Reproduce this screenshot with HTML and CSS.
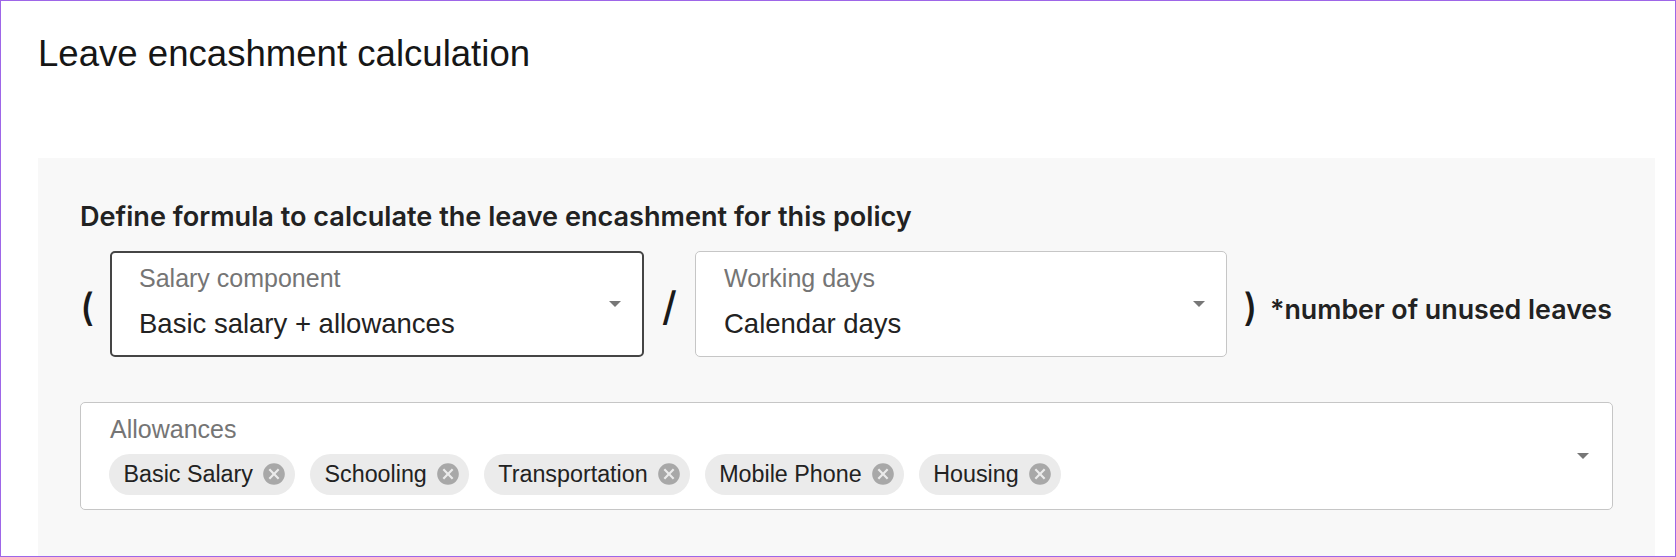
FILE: index.html
```html
<!DOCTYPE html>
<html lang="en">
<head>
<meta charset="utf-8">
<title>Leave encashment calculation</title>
<link rel="stylesheet" href="styles.css">
</head>
<body>
<div class="frame">
  <h1 class="title">Leave encashment calculation</h1>
  <section class="panel">
    <p class="intro">Define formula to calculate the leave encashment for this policy</p>
    <div class="formula">
      <span class="sym sym-open">(</span>
      <div class="select select-active">
        <div class="select-body">
          <span class="select-label">Salary component</span>
          <span class="select-value">Basic salary + allowances</span>
        </div>
        <svg class="caret" width="12" height="6" viewBox="0 0 12 6"><path d="M0 0H12L6 6Z"/></svg>
      </div>
      <span class="sym sym-slash">/</span>
      <div class="select">
        <div class="select-body">
          <span class="select-label">Working days</span>
          <span class="select-value">Calendar days</span>
        </div>
        <svg class="caret" width="12" height="6" viewBox="0 0 12 6"><path d="M0 0H12L6 6Z"/></svg>
      </div>
      <span class="sym sym-close">)</span>
      <span class="suffix">*number of unused leaves</span>
    </div>
    <div class="multi">
      <div class="multi-body">
        <span class="select-label">Allowances</span>
        <div class="chips">
          <span class="chip">Basic Salary<svg class="chip-x" viewBox="0 0 24 24"><path d="M12 2C6.47 2 2 6.47 2 12s4.47 10 10 10 10-4.47 10-10S17.53 2 12 2zm5 13.59L15.59 17 12 13.41 8.41 17 7 15.59 10.59 12 7 8.41 8.41 7 12 10.59 15.59 7 17 8.41 13.41 12 17 15.59z"/></svg></span>
          <span class="chip">Schooling<svg class="chip-x" viewBox="0 0 24 24"><path d="M12 2C6.47 2 2 6.47 2 12s4.47 10 10 10 10-4.47 10-10S17.53 2 12 2zm5 13.59L15.59 17 12 13.41 8.41 17 7 15.59 10.59 12 7 8.41 8.41 7 12 10.59 15.59 7 17 8.41 13.41 12 17 15.59z"/></svg></span>
          <span class="chip">Transportation<svg class="chip-x" viewBox="0 0 24 24"><path d="M12 2C6.47 2 2 6.47 2 12s4.47 10 10 10 10-4.47 10-10S17.53 2 12 2zm5 13.59L15.59 17 12 13.41 8.41 17 7 15.59 10.59 12 7 8.41 8.41 7 12 10.59 15.59 7 17 8.41 13.41 12 17 15.59z"/></svg></span>
          <span class="chip">Mobile Phone<svg class="chip-x" viewBox="0 0 24 24"><path d="M12 2C6.47 2 2 6.47 2 12s4.47 10 10 10 10-4.47 10-10S17.53 2 12 2zm5 13.59L15.59 17 12 13.41 8.41 17 7 15.59 10.59 12 7 8.41 8.41 7 12 10.59 15.59 7 17 8.41 13.41 12 17 15.59z"/></svg></span>
          <span class="chip">Housing<svg class="chip-x" viewBox="0 0 24 24"><path d="M12 2C6.47 2 2 6.47 2 12s4.47 10 10 10 10-4.47 10-10S17.53 2 12 2zm5 13.59L15.59 17 12 13.41 8.41 17 7 15.59 10.59 12 7 8.41 8.41 7 12 10.59 15.59 7 17 8.41 13.41 12 17 15.59z"/></svg></span>
        </div>
      </div>
      <svg class="caret" width="12" height="6" viewBox="0 0 12 6"><path d="M0 0H12L6 6Z"/></svg>
    </div>
  </section>
</div>
</body>
</html>
```

FILE: styles.css
```css
* { box-sizing: border-box; }

html, body {
  margin: 0;
  padding: 0;
  background: #ffffff;
}

body {
  font-family: "Liberation Sans", Arial, sans-serif;
  color: #1f1f1f;
}

.frame {
  width: 1676px;
  height: 557px;
  border: 1px solid #9e66e8;
  padding: 32px 20px 0 37px;
  overflow: hidden;
  display: flex;
  flex-direction: column;
}

.title {
  margin: 0;
  font-size: 36.6px;
  line-height: 41px;
  font-weight: 400;
  color: #161616;
}

.panel {
  margin-top: 84px;
  background: #f8f8f8;
  padding: 43px 42px 60px 42px;
  flex: 1 0 auto;
}

.intro {
  margin: 0;
  font-family: Inter, "Liberation Sans", sans-serif;
  font-size: 27.1px;
  line-height: 31px;
  font-weight: 600;
  color: #222222;
}

.formula {
  margin-top: 19px;
  display: flex;
  align-items: center;
  height: 106px;
}

.sym {
  flex: none;
  font-family: Inter, "Liberation Sans", sans-serif;
  font-size: 38px;
  font-weight: 500;
  color: #1a1a1a;
  line-height: 44px;
  text-align: center;
  padding-top: 6px;
}

.sym-open { width: 12px; margin-right: 18px; text-align: left; }
.sym-slash { width: 51px; font-size: 40px; }
.sym-close { width: 43px; padding-left: 4px; }

.suffix {
  flex: none;
  font-family: Inter, "Liberation Sans", sans-serif;
  font-size: 26.8px;
  font-weight: 600;
  line-height: 31px;
  color: #222222;
  padding-top: 10px;
  white-space: nowrap;
}

.select {
  flex: none;
  width: 532px;
  height: 106px;
  background: #ffffff;
  border: 1px solid #c6c6c6;
  border-radius: 5px;
  display: flex;
  align-items: center;
  padding: 0 21px 0 28px;
}

.select-active {
  width: 534px;
  border: 2px solid #454545;
  padding-left: 27px;
}

.select-body {
  flex: 1;
  display: flex;
  flex-direction: column;
  gap: 16px;
  padding-bottom: 6px;
}

.select-label {
  font-size: 25px;
  line-height: 28px;
  color: #757575;
}

.select-value {
  font-size: 27.5px;
  line-height: 31px;
  color: #222222;
}

.caret { fill: #777777; flex: none; }

.multi {
  margin-top: 45px;
  height: 108px;
  background: #ffffff;
  border: 1px solid #c6c6c6;
  border-radius: 5px;
  display: flex;
  align-items: center;
  padding: 0 23px 0 27px;
}

.multi-body {
  flex: 1;
  display: flex;
  flex-direction: column;
  gap: 11px;
  padding-bottom: 3px;
  padding-left: 1px;
}

.multi-body .select-label { padding-left: 1px; }

.chips {
  display: flex;
  gap: 15px;
}

.chip {
  display: inline-flex;
  align-items: center;
  height: 41px;
  border-radius: 21px;
  background: #ebebeb;
  padding: 0 8px 0 14.5px;
  font-size: 23.3px;
  color: #222222;
  white-space: nowrap;
}

.chip-x {
  width: 26px;
  height: 26px;
  fill: #a8a8a8;
  margin-left: 8px;
}
```
